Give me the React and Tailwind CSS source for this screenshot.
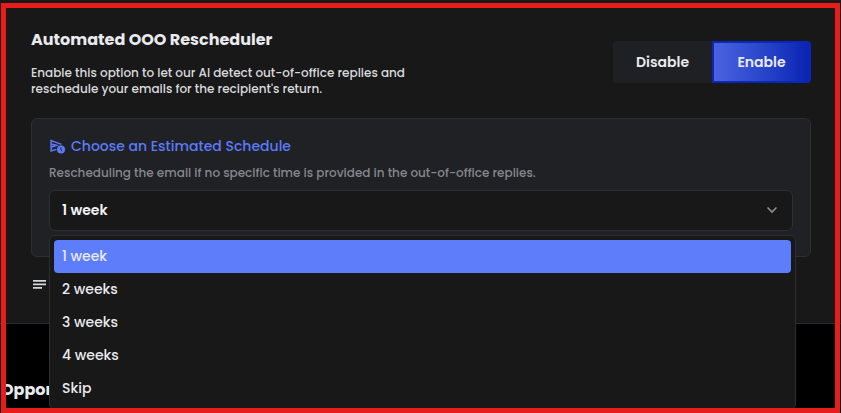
import React, { useState } from 'react';

const OPTIONS = ['1 week', '2 weeks', '3 weeks', '4 weeks', 'Skip'];

const ScheduleIcon = () => (
  <svg className="w-4 h-4 shrink-0" viewBox="0 0 16 16" fill="none" aria-hidden="true">
    <path d="M7.4 11.4L2.1 13V2.6L12.4 6.4M2.1 6.1L7.4 7.4L2.1 9.2" stroke="#5b7bfa" strokeWidth="1.5" />
    <circle cx="12" cy="11.6" r="4" fill="#5b7bfa" />
    <path d="M11.9 9.4v2.4l1.4 1.2" stroke="#202124" strokeWidth="1" />
  </svg>
);

const LinesIcon = () => (
  <svg className="w-4 h-4" viewBox="0 0 16 16" stroke="#d5d6da" strokeWidth="1.8" aria-hidden="true">
    <path d="M2 3.8h13M2 7.3h13M2 10.8h9" />
  </svg>
);

const ChevronIcon = () => (
  <svg
    className="w-3 h-3 absolute right-[15px] top-[14px] pointer-events-none"
    viewBox="0 0 12 12"
    fill="none"
    stroke="#8b8d93"
    strokeWidth="1.7"
    aria-hidden="true"
  >
    <path d="M1.5 3.5L6 8l4.5-4.5" />
  </svg>
);

const App = () => {
  const [enabled, setEnabled] = useState(true);
  const [schedule, setSchedule] = useState('1 week');
  const [open, setOpen] = useState(true);

  const pick = (option) => {
    setSchedule(option);
    setOpen(false);
  };

  const active = 'border-[#0c27b8] bg-linear-to-r from-[#4a63e0] to-[#0a22b4]';
  const inactive = 'border-[#1f2023] bg-[#1f2023]';

  return (
    <div className="relative h-screen overflow-hidden bg-black font-['Poppins','Inter',sans-serif] text-[#e9eaee]">
      {/* Rescheduler card */}
      <section className="bg-[#181818] border-b border-[#2a2b30] pl-[31px] pr-[30px] pt-[27px] pb-[30px]">
        <div className="flex justify-between items-start">
          <div>
            <h2 className="text-[16px] leading-[26px] font-bold">Automated OOO Rescheduler</h2>
            <p className="mt-3 max-w-[400px] text-[12px] leading-4 font-medium text-[#d9dade]">
              Enable this option to let our AI detect out-of-office replies and reschedule your emails for the
              recipient's return.
            </p>
          </div>
          <div className="mt-[14px] flex text-[14px] font-semibold">
            <button
              type="button"
              aria-pressed={!enabled}
              onClick={() => setEnabled(false)}
              className={`w-[99px] h-[42px] rounded-l border-2 ${enabled ? inactive : active}`}
            >
              Disable
            </button>
            <button
              type="button"
              aria-pressed={enabled}
              onClick={() => setEnabled(true)}
              className={`w-[99px] h-[42px] rounded-r border-2 ${enabled ? active : inactive}`}
            >
              Enable
            </button>
          </div>
        </div>

        {/* Schedule picker */}
        <div className="mt-[21px] rounded-md border border-[#2d2e34] bg-[#202124] px-[17px] pt-[15px] pb-[25px]">
          <label htmlFor="schedule" className="flex items-center gap-[6px] text-[14px] leading-6 font-medium text-[#5b7bfa]">
            <ScheduleIcon />
            Choose an Estimated Schedule
          </label>
          <p className="mt-[5px] text-[12px] leading-5 font-medium text-[#85878d]">
            Rescheduling the email if no specific time is provided in the out-of-office replies.
          </p>

          <div className="relative mt-[7px]">
            <select
              id="schedule"
              value={schedule}
              onChange={(e) => setSchedule(e.target.value)}
              className="block w-full h-[41px] appearance-none rounded-md border border-[#2d2e34] bg-[#181818] px-3 text-[14px] font-semibold text-[#f3f4f6]"
            >
              {OPTIONS.map((option) => (
                <option key={option}>{option}</option>
              ))}
            </select>
            <ChevronIcon />

            {open && (
              <div className="absolute top-full left-0 -right-[3px] z-10 mt-1 rounded-md border border-[#2d2e34] bg-[#181818] p-1">
                {OPTIONS.map((option) => (
                  <button
                    key={option}
                    type="button"
                    onClick={() => pick(option)}
                    className={`block w-full h-[33px] rounded px-2 text-left text-[14px] font-medium ${
                      option === schedule ? 'bg-[#5d7dfa]' : ''
                    }`}
                  >
                    {option}
                  </button>
                ))}
              </div>
            )}
          </div>
        </div>

        <div className="mt-5">
          <LinesIcon />
        </div>
      </section>

      <h2 className="mt-[53px] pl-px text-[16px] leading-[26px] font-bold">Oppor</h2>

      {/* Highlight frame */}
      <div className="absolute inset-x-px top-[3px] bottom-0 z-20 border-[5px] border-[#e91c1c] pointer-events-none" />
    </div>
  );
};

export default App;
